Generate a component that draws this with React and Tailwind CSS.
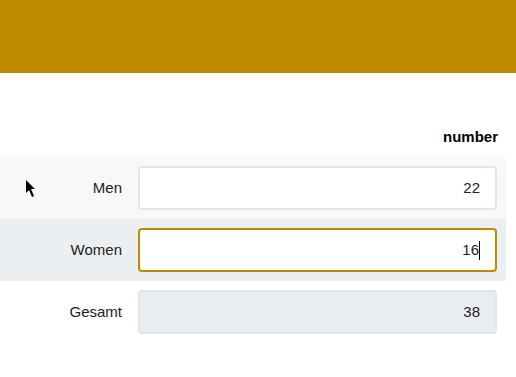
export default function App() {
  const rows = [
    { label: 'Men', value: '22', bg: 'bg-[#f8f8f8]', kind: 'normal' },
    { label: 'Women', value: '16', bg: 'bg-[#ebeff1]', kind: 'focus' },
    { label: 'Gesamt', value: '38', bg: 'bg-white', kind: 'disabled' },
  ]

  const fieldClass = {
    normal: 'bg-white border-2 border-[#dfe5ea]',
    focus: 'bg-white border-2 border-[#c08a00]',
    disabled: 'bg-[#e9edef] border-2 border-[#dfe5ea]',
  }

  return (
    <div className="relative w-[516px] h-[377px] bg-white font-['Liberation_Sans',Arial,sans-serif] text-[15px] text-[#222]">
      {/* Header */}
      <div className="h-[73px] bg-[#c08a00]" />

      {/* Column title */}
      <div className="w-[506px] flex justify-end pr-[8px] pt-[54px] pb-[10px]">
        <span className="font-bold text-black leading-[20px]">number</span>
      </div>

      {/* Rows */}
      <div className="w-[506px]">
        {rows.map((r) => (
          <div key={r.label} className={`flex items-center h-[62px] ${r.bg}`}>
            <div className="w-[123px] text-right pr-[1px]">{r.label}</div>
            <div
              className={`ml-[15px] w-[359px] h-[44px] rounded-[4px] flex items-center justify-end pr-[15px] ${fieldClass[r.kind]}`}
            >
              <span>{r.value}</span>
              {r.kind === 'focus' && <span className="w-px h-[19px] bg-black" />}
            </div>
          </div>
        ))}
      </div>

      {/* Mouse pointer */}
      <svg className="absolute left-[25px] top-[179px]" width="12" height="20" viewBox="0 0 12 20">
        <path d="M1 1 L1 14 L4 11 L7 18 L9 17 L6 10 L10 10 Z" fill="black" />
      </svg>
    </div>
  )
}
